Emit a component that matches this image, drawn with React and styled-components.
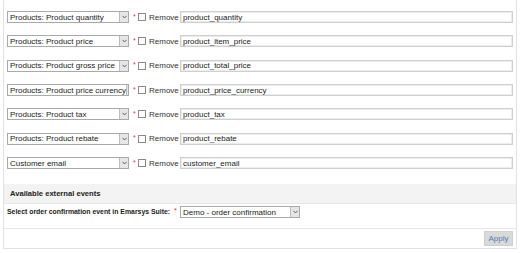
import React from 'react'
import styled, { createGlobalStyle } from 'styled-components'

const GlobalStyle = createGlobalStyle`
    html, body {
        margin: 0;
        padding: 0;
        background: #ffffff;
    }
    body {
        font-family: "Liberation Sans", Arial, sans-serif;
        font-size: 8px;
        color: #222222;
    }
`

const Page = styled.div`
    width: 522px;
    height: 253px;
    padding-left: 3px;
    box-sizing: border-box;
`
const Panel = styled.div`
    width: 514px;
    box-sizing: border-box;
    border-left: 1px solid #e2e2e2;
    border-right: 1px solid #e2e2e2;
    border-bottom: 1px solid #e2e2e2;
`
const Mappings = styled.div`
    padding-top: 5px;
    padding-bottom: 9px;
`
const Row = styled.div`
    height: 24.33px;
    display: flex;
    align-items: center;
    padding-left: 3px;
`
const SelectBox = styled.div`
    width: ${p => p.width}px;
    height: 12px;
    box-sizing: border-box;
    border: 1px solid #a9a9a9;
    background: #fff;
    display: flex;
    align-items: center;
    justify-content: space-between;
    padding-left: 2px;
    font-size: 8px;
    white-space: nowrap;
    overflow: hidden;
    flex-shrink: 0;
`
const Arrow = styled.span`
    width: 9px;
    height: 10px;
    box-sizing: border-box;
    border-left: 1px solid #bdbdbd;
    background: #e6e6e6;
    display: flex;
    align-items: center;
    justify-content: center;
    flex-shrink: 0;
`
const Star = styled.span`
    color: #e0303a;
    font-size: 7px;
    width: 5px;
    margin: 0 0 0 4px;
    position: relative;
    top: -1px;
`
const Check = styled.span`
    width: 8px;
    height: 8px;
    box-sizing: border-box;
    border: 1px solid #8a8a8a;
    background: #fff;
    margin-right: 3px;
`
const RemoveLabel = styled.span`
    color: #333;
    font-size: 8px;
    width: 31px;
`
const TextInput = styled.div`
    width: 333px;
    height: 12px;
    box-sizing: border-box;
    border: 1px solid #cfcfcf;
    box-shadow: inset 0 0 0 1px #ececec;
    padding-left: 2px;
    display: flex;
    align-items: center;
    font-size: 8px;
`
const SectionHead = styled.div`
    height: 19px;
    background: #f3f3f3;
    border-bottom: 1px solid #e6e6e6;
    display: flex;
    align-items: center;
    padding-left: 6px;
    font-weight: bold;
    font-size: 7.6px;
`
const EventRow = styled.div`
    height: 25px;
    display: flex;
    align-items: flex-start;
    padding: 2px 0 0 3px;
    box-sizing: border-box;
    border-bottom: 1px solid #e6e6e6;
`
const EventLabel = styled.span`
    font-weight: bold;
    font-size: 6.9px;
    margin-top: 2px;
    width: 167px;
    white-space: nowrap;
`
const EventStar = styled(Star)`
    width: 6px;
    margin: 0;
    top: 1px;
`
const Footer = styled.div`
    height: 19px;
    display: flex;
    justify-content: flex-end;
    align-items: center;
    padding-right: 3px;
`
const ApplyButton = styled.button`
    width: 29px;
    height: 15px;
    padding: 0;
    border: 1px solid #cfcfcf;
    background: #d9d9d9;
    color: #4f7fae;
    font-family: "Liberation Sans", Arial, sans-serif;
    font-size: 8px;
`

const Chevron = () => (
    <svg width="5" height="4" viewBox="0 0 5 4">
        <path d="M0.5 0.8 L2.5 3 L4.5 0.8" fill="none" stroke="#555" strokeWidth="0.9" />
    </svg>
)

const Select = ({ width, children }) => (
    <SelectBox width={width}>
        <span>{children}</span>
        <Arrow><Chevron /></Arrow>
    </SelectBox>
)

const rows = [
    ['Products: Product quantity', 'product_quantity'],
    ['Products: Product price', 'product_item_price'],
    ['Products: Product gross price', 'product_total_price'],
    ['Products: Product price currency', 'product_price_currency'],
    ['Products: Product tax', 'product_tax'],
    ['Products: Product rebate', 'product_rebate'],
    ['Customer email', 'customer_email'],
]

const App = () => (
    <Page>
        <GlobalStyle />
        <Panel>
            <Mappings>
                {rows.map(([field, key]) => (
                    <Row key={key}>
                        <Select width={122}>{field}</Select>
                        <Star>*</Star>
                        <Check />
                        <RemoveLabel>Remove</RemoveLabel>
                        <TextInput>{key}</TextInput>
                    </Row>
                ))}
            </Mappings>
            <SectionHead>Available external events</SectionHead>
            <EventRow>
                <EventLabel>Select order confirmation event in Emarsys Suite:</EventLabel>
                <EventStar>*</EventStar>
                <Select width={120}>Demo - order confirmation</Select>
            </EventRow>
            <Footer>
                <ApplyButton>Apply</ApplyButton>
            </Footer>
        </Panel>
    </Page>
)

export default App
